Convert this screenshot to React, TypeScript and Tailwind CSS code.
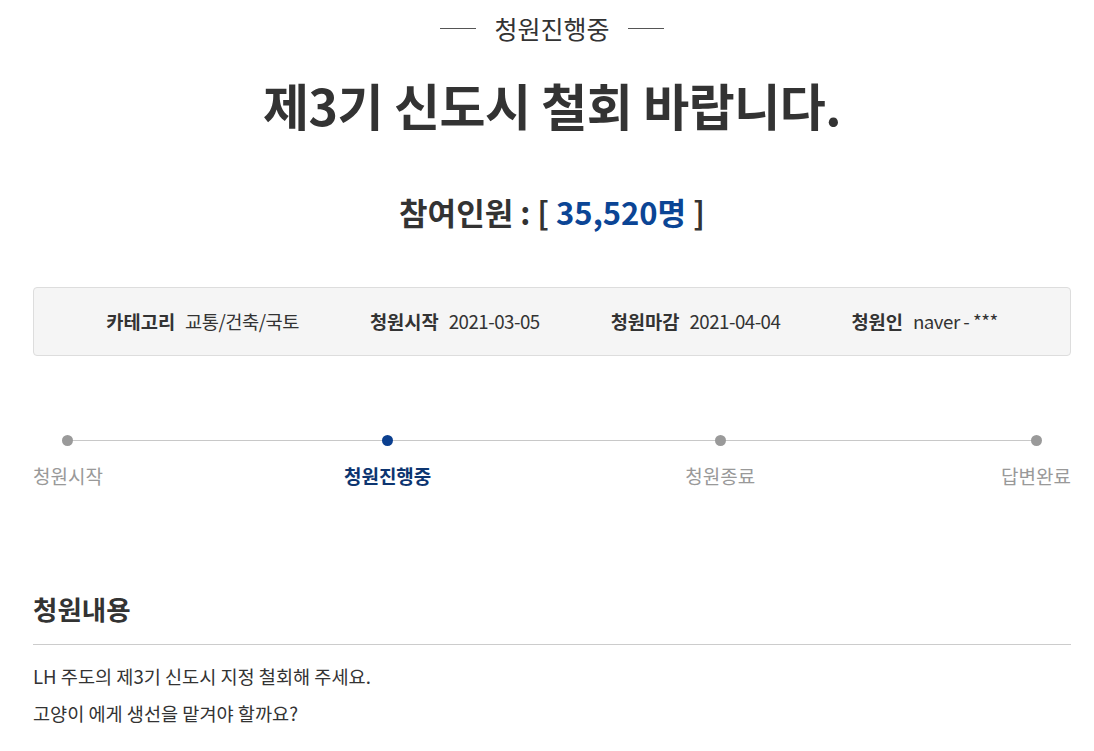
const steps = [
  { label: "청원시작", active: false, cls: "" },
  { label: "청원진행중", active: true, cls: "ml-[241px]" },
  { label: "청원종료", active: false, cls: "ml-[254px]" },
  { label: "답변완료", active: false, cls: "ml-auto" },
];

const info = [
  ["카테고리", "교통/건축/국토"],
  ["청원시작", "2021-03-05"],
  ["청원마감", "2021-04-04"],
  ["청원인", "naver - ***"],
];

export default function App() {
  return (
    <div
      className="min-h-screen bg-white text-[#333] pl-[33px] pr-[23px]"
      style={{ fontFamily: '"Noto Sans CJK KR", "Noto Sans", sans-serif' }}
    >
      {/* status */}
      <div className="flex items-center justify-center gap-[18px] pt-[10px]">
        <span className="w-[36px] h-px bg-[#555]" />
        <span className="text-[25px] leading-[36px] text-[#333]">청원진행중</span>
        <span className="w-[36px] h-px bg-[#555]" />
      </div>

      <h1 className="text-center text-[50px] font-bold leading-[64px] mt-[26px] tracking-[-0.5px]">
        제3기 신도시 철회 바랍니다.
      </h1>

      <div className="text-center text-[31px] font-bold leading-[40px] mt-[56px]">
        참여인원 : [ <span className="text-[#0b4595]">35,520명</span> ]
      </div>

      {/* info box */}
      <div className="mt-[55px] h-[69px] bg-[#f5f5f5] border border-[#ddd] rounded-[4px] flex items-center justify-center gap-[71px] text-[18.7px]">
        {info.map(([k, v]) => (
          <div key={k} className="flex items-center gap-[10px]">
            <span className="font-bold">{k}</span>
            <span className="tracking-[-0.5px]">{v}</span>
          </div>
        ))}
      </div>

      {/* progress */}
      <div className="relative mt-[75px]">
        <div className="absolute left-[34px] right-[35px] top-[9px] h-px bg-[#c8c8c8]" />
        <div className="flex">
          {steps.map((s) => (
            <div key={s.label} className={`relative flex flex-col items-center ${s.cls}`}>
              <span
                className={`w-[11px] h-[11px] rounded-full mt-[4px] ${
                  s.active ? "bg-[#0b3f8f]" : "bg-[#9a9a9a]"
                }`}
              />
              <span
                className={`text-[19px] leading-[26px] mt-[17px] ${
                  s.active ? "font-bold text-[#0d3570]" : "text-[#999]"
                }`}
              >
                {s.label}
              </span>
            </div>
          ))}
        </div>
      </div>

      {/* content */}
      <h2 className="text-[26.5px] font-bold leading-[36px] mt-[102px]">청원내용</h2>
      <div className="h-px bg-[#ccc] mt-[17px]" />
      <div className="text-[18.6px] leading-[37px] mt-[12px]">
        <p>LH 주도의 제3기 신도시 지정 철회해 주세요.</p>
        <p>고양이 에게 생선을 맡겨야 할까요?</p>
      </div>
    </div>
  );
}
